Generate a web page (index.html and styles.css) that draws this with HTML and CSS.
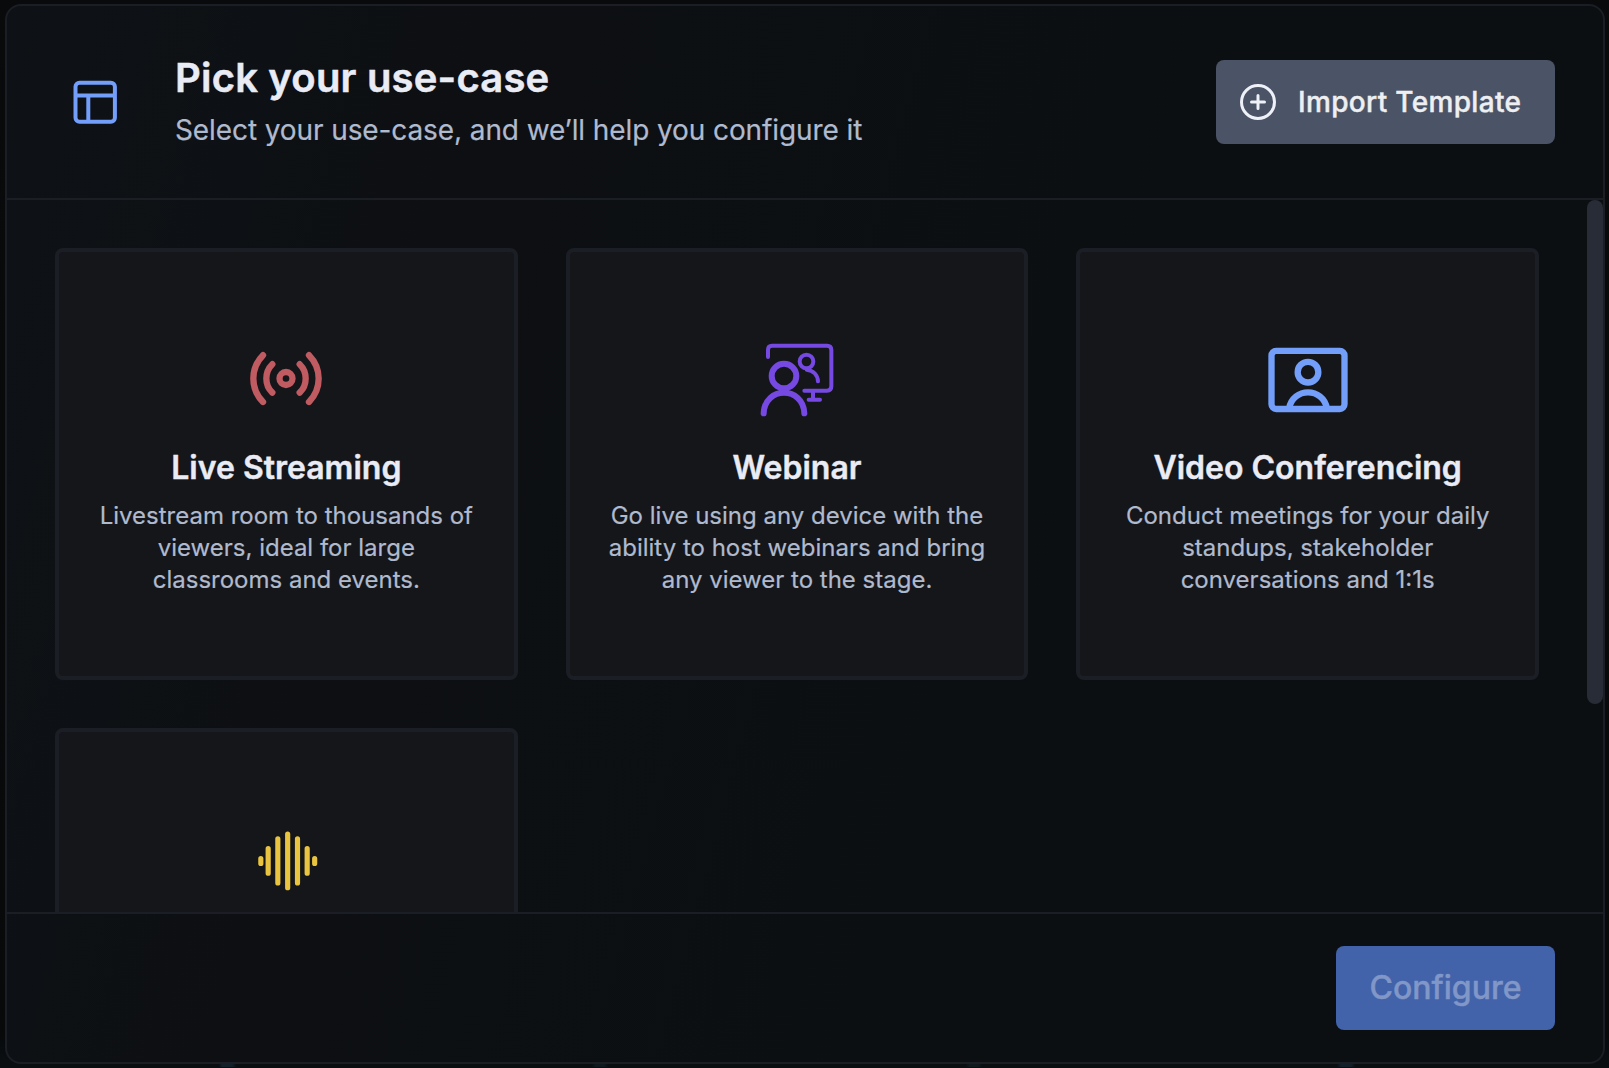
FILE: index.html
```html
<!DOCTYPE html>
<html lang="en">
<head>
<meta charset="utf-8">
<title>Pick your use-case</title>
<link rel="stylesheet" href="styles.css">
</head>
<body>
<main class="modal">
  <header class="header">
    <svg class="header-icon" viewBox="0 0 48 48" fill="none" stroke="currentColor" stroke-width="4">
      <rect x="4.5" y="4.700" width="39.4" height="39" rx="4"/>
      <path d="M4.500 17.5h40M17.300 17.5V44"/>
    </svg>
    <div class="heading">
      <h1 class="title">Pick your use-case</h1>
      <p class="subtitle">Select your use-case, and we’ll help you configure it</p>
    </div>
    <button class="button import" type="button">
      <svg class="plus-icon" viewBox="0 0 36 36" fill="none" stroke="currentColor" stroke-width="3" stroke-linecap="round">
        <circle cx="18" cy="18" r="16.5"/>
        <path d="M18 11.5v13M11.5 18h13"/>
      </svg>
      <span>Import Template</span>
    </button>
  </header>
  <section class="body">
    <div class="grid">
      <article class="card">
        <svg class="card-icon live" viewBox="48 57 240 240" fill="none" stroke="currentColor" stroke-width="19" stroke-linecap="round">
          <circle cx="168" cy="175.500" r="19.500"/>
          <path d="M127 132.500Q109 150 109 175.500T127 218M209 132.500Q227 150 227 175.500T209 218"/>
          <path d="M99 105.500Q70 135 70 175.500T99 246M237 105.500Q266 135 266 175.500T237 246"/>
        </svg>
        <h2 class="card-title">Live Streaming</h2>
        <p class="card-text">Livestream room to thousands of viewers, ideal for large classrooms and events.</p>
      </article>
      <article class="card">
        <svg class="card-icon webinar" viewBox="81 57 240 240" fill="none" stroke="currentColor" stroke-width="12" stroke-linecap="round" stroke-linejoin="round">
          <path d="M114 111V89q0-12 12-12H291q13 0 13 13V199q0 13-13 13H223M249 214v23M236 239h34"/>
          <circle cx="229.500" cy="124.500" r="20.500"/>
          <path d="M230 149C251 151 263 166 264 184"/>
          <g stroke-width="18">
            <circle cx="162" cy="168" r="37"/>
            <path d="M101 280C104 198 220 198 223 280"/>
          </g>
        </svg>
        <h2 class="card-title">Webinar</h2>
        <p class="card-text">Go live using any device with the ability to host webinars and bring any viewer to the stage.</p>
      </article>
      <article class="card">
        <svg class="card-icon video" viewBox="84 57 240 240" fill="none" stroke="currentColor" stroke-width="19">
          <rect x="94.500" y="92.500" width="219" height="174.500" rx="14"/>
          <circle cx="204" cy="156.500" r="31"/>
          <path d="M147 266C158 201 250 201 261 266"/>
        </svg>
        <h2 class="card-title">Video Conferencing</h2>
        <p class="card-text">Conduct meetings for your daily standups, stakeholder conversations and 1:1s</p>
      </article>
      <article class="card">
        <svg class="card-icon audio" viewBox="48 57 240 240" fill="none" stroke="currentColor" stroke-width="15.500" stroke-linecap="round">
          <path d="M92.500 175.500v15M114.500 146v73.500M143.500 116.500V249M173 102.500V263M202.500 116.500V249M231.500 146v73.500M254 175.500v15"/>
        </svg>
      </article>
    </div>
    <div class="scrollbar"><div class="thumb"></div></div>
  </section>
  <footer class="footer">
    <button class="button configure" type="button" disabled>Configure</button>
  </footer>
</main>
</body>
</html>
```

FILE: styles.css
```css
* {
  box-sizing: border-box;
}

body {
  margin: 0;
  height: 1068px;
  padding: 4px 4px 4px 5px;
  overflow: hidden;
  background:
    linear-gradient(90deg, transparent 219px, #13202a 222px 232px, transparent 236px 592px, #101a1e 596px 604px, transparent 608px 966px, #101a1e 970px 978px, transparent 982px 1337px, #13202a 1341px 1351px, transparent 1355px) 0 1064px / 100% 3px no-repeat,
    linear-gradient(180deg, #080a0c 0%, #07090b 97%, #0a0e11 99%);
  font-family: Inter, "Liberation Sans", sans-serif;
}

h1, h2, p {
  margin: 0;
}

.modal {
  display: flex;
  flex-direction: column;
  height: 1060px;
  border: 2px solid #1b1e25;
  border-radius: 16px;
  overflow: hidden;
  background: linear-gradient(105deg, #0e1216 0%, #0d0f12 30%, #0c0f11 65%, #0b0f11 100%);
}

.header {
  display: flex;
  align-items: flex-start;
  height: 194px;
  padding: 0 48px 0 64px;
  border-bottom: 2px solid #1b1e25;
}

.header-icon {
  flex: none;
  width: 48px;
  height: 48px;
  margin-top: 72px;
  color: #739ffb;
}

.heading {
  flex: 1;
  margin: 46px 0 0 56px;
}

.title {
  font-size: 40px;
  line-height: 52px;
  font-weight: 600;
  letter-spacing: 0.19px;
  color: #eaecf5;
  white-space: nowrap;
  -webkit-text-stroke: 0.5px currentColor;
}

.subtitle {
  margin-top: 6px;
  font-size: 28px;
  line-height: 40px;
  color: #b0bace;
  letter-spacing: -0.1px;
  white-space: nowrap;
  -webkit-text-stroke: 0.2px currentColor;
}

.button {
  display: flex;
  align-items: center;
  height: 84px;
  border: 0;
  border-radius: 8px;
  font-family: inherit;
  font-weight: 500;
  white-space: nowrap;
  -webkit-text-stroke: 0.4px currentColor;
}

.import {
  gap: 22px;
  width: 339px;
  margin-top: 54px;
  padding: 0 0 0 24px;
  background: #4b5366;
  color: #eeeff1;
  font-size: 28px;
  letter-spacing: 0.33px;
}

.plus-icon {
  flex: none;
  width: 36px;
  height: 36px;
  color: #eff1f8;
}

.body {
  display: flex;
  flex: 1;
  min-height: 0;
  overflow: hidden;
}

.grid {
  display: grid;
  flex: 1;
  grid-template-columns: repeat(3, 1fr);
  grid-auto-rows: 432px;
  align-content: start;
  gap: 48px;
  padding: 48px;
}

.card {
  display: flex;
  flex-direction: column;
  align-items: center;
  padding: 87px 32px 0;
  border: 4px solid #1c1e26;
  border-radius: 8px;
  background: #15161a;
  text-align: center;
}

.card-icon {
  width: 80px;
  height: 80px;
}

.live { color: #c05b61; }
.webinar { color: #7549e2; }
.video { color: #739ffb; }
.audio { color: #e9c440; }

.card-title {
  margin-top: 25px;
  font-size: 32px;
  line-height: 48px;
  font-weight: 600;
  color: #eaecf5;
  white-space: nowrap;
  -webkit-text-stroke: 0.4px currentColor;
}

.card-text {
  margin-top: 8px;
  font-size: 24px;
  line-height: 32px;
  color: #b0bace;
  -webkit-text-stroke: 0.2px currentColor;
}

.scrollbar {
  width: 16px;
}

.thumb {
  height: 504px;
  border-radius: 8px;
  background: #272c36;
}

.footer {
  display: flex;
  justify-content: flex-end;
  height: 150px;
  padding: 32px 48px 0 0;
  border-top: 2px solid #1b1e25;
}

.configure {
  justify-content: center;
  width: 219px;
  padding: 0 0 2px;
  background: #4263aa;
  color: #8197c8;
  font-size: 32px;
}
```
